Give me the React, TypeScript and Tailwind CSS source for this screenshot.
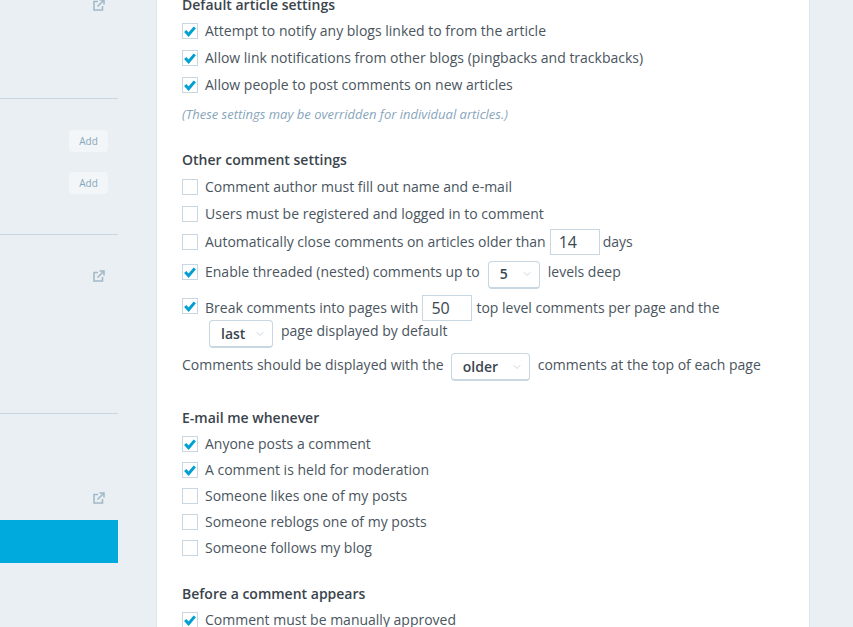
import { ChevronDown } from 'lucide-react'

function Check({ on, cls }: { on?: boolean; cls?: string }) {
  return (
    <span className={`flex h-4 w-4 shrink-0 items-center justify-center border border-[#c8d7e1] bg-white ${cls ?? ''}`}>
      {on && (
        <svg width="14" height="14" viewBox="0 0 14 14">
          <path d="M2.2 7 L5.6 10.8 L11.8 3.4" fill="none" stroke="#00a0d2" strokeWidth="3" />
        </svg>
      )}
    </span>
  )
}

function Row({ on, label, h }: { on?: boolean; label: string; h: string }) {
  return (
    <div className={`flex items-center gap-2 ${h}`}>
      <Check on={on} />
      <span className="-ml-[1px]">{label}</span>
    </div>
  )
}

function Select({ value, w }: { value: string; w: string }) {
  return (
    <span className={`inline-flex h-[28px] items-center justify-between rounded border border-b-2 border-[#c8d7e1] bg-white pl-[11px] pr-[6px] font-semibold text-[#3a4750] ${w}`}>
      {value}
      <ChevronDown size={12} className="text-[#c8d7e1]" />
    </span>
  )
}

function NumBox({ value, cls }: { value: string; cls?: string }) {
  return (
    <span className={`flex h-[26px] w-[50px] items-center border border-[#c8d7e1] bg-white pl-[8px] text-base text-[#3a4750] ${cls ?? ''}`}>
      {value}
    </span>
  )
}

function Heading({ children, cls }: { children: string; cls: string }) {
  return <h3 className={`flex items-center font-semibold text-[#3a444c] ${cls}`}>{children}</h3>
}

function LinkIcon() {
  return (
    <svg width="12" height="12" viewBox="0 0 12 12" fill="none" stroke="#a3b9c9" strokeWidth="1.6" className="-mt-[1px]">
      <path d="M5 2.5 H1 V11 H9.5 V7" />
      <path d="M4.5 7.5 L10.5 1.5 M6.5 1 H11 V5.5" />
    </svg>
  )
}

function Sidebar() {
  return (
    <aside className="flex w-[118px] shrink-0 flex-col">
      <div className="flex h-[99px] justify-end border-b border-[#c8d7e1] pr-[13px]">
        <LinkIcon />
      </div>
      <div className="flex h-[136px] flex-col items-end gap-[20px] border-b border-[#c8d7e1] pr-[10px] pt-[31px]">
        <AddButton />
        <AddButton />
      </div>
      <div className="flex h-[179px] justify-end border-b border-[#c8d7e1] pr-[13px] pt-[36px]">
        <LinkIcon />
      </div>
      <div className="flex h-[106px] justify-end pr-[13px] pt-[79px]">
        <LinkIcon />
      </div>
      <div className="h-[43px] bg-[#00aadc]" />
    </aside>
  )
}

function AddButton() {
  return (
    <span className="flex h-[22px] w-[39px] items-center justify-center rounded-sm bg-[#f3f6f8] text-[10px] text-[#87a6bc]">
      Add
    </span>
  )
}

export default function App() {
  return (
    <div className="flex h-[627px] w-[853px] overflow-hidden bg-[#e9eff3] font-['Open_Sans',sans-serif] text-sm text-[#4a555e]">
      <Sidebar />
      <main className="ml-[38px] h-[627px] w-[654px] shrink-0 overflow-hidden border-x border-[#dde6ec] bg-white pl-[25px]">
        <Heading cls="h-[18px] -mt-[4px]">Default article settings</Heading>
        <div className="mt-[-1px]">
          <Row on h="h-[27px] mt-[4px]" label="Attempt to notify any blogs linked to from the article" />
          <Row on h="h-[27px]" label="Allow link notifications from other blogs (pingbacks and trackbacks)" />
          <Row on h="h-[27px]" label="Allow people to post comments on new articles" />
        </div>
        <p className="mt-[5px] flex h-[22px] items-center text-[13px] italic text-[#87a6bc]">
          (These settings may be overridden for individual articles.)
        </p>
        <Heading cls="mt-[23px] h-[24px]">Other comment settings</Heading>
        <Row h="h-[27px] mt-[1px]" label="Comment author must fill out name and e-mail" />
        <Row h="h-[27px]" label="Users must be registered and logged in to comment" />
        <div className="mt-[1px] flex h-[28px] items-center gap-2">
          <Check />
          <span className="-ml-[1px]">Automatically close comments on articles older than</span>
          <span className="-ml-[4px] flex items-center gap-[3px]">
            <NumBox value="14" />
            <span>days</span>
          </span>
        </div>
        <div className="flex h-[32px] items-center gap-2">
          <Check on />
          <span className="-ml-[1px]">Enable threaded (nested) comments up to</span>
          <Select value="5" w="mt-[5px] w-[52px]" />
          <span>levels deep</span>
        </div>
        <div className="mt-[4px] flex h-[32px] items-center gap-2">
          <Check on cls="-mt-[4px]" />
          <span className="-ml-[1px]">Break comments into pages with</span>
          <NumBox value="50" cls="-ml-[4px]" />
          <span className="-ml-[4px]">top level comments per page and the</span>
        </div>
        <div className="-mt-[5px] ml-[27px] flex h-[24px] items-center gap-2">
          <Select value="last" w="mt-[6px] w-[64px]" />
          <span>page displayed by default</span>
        </div>
        <div className="mt-[8px] flex h-[28px] items-center gap-2">
          <span className="-ml-[0px]">Comments should be displayed with the</span>
          <Select value="older" w="-ml-[1px] mt-[4px] w-[79px]" />
          <span>comments at the top of each page</span>
        </div>
        <Heading cls="mt-[27px] h-[24px]">E-mail me whenever</Heading>
        <Row on h="h-[26px] mt-[1px]" label="Anyone posts a comment" />
        <Row on h="h-[26px]" label="A comment is held for moderation" />
        <Row h="h-[26px]" label="Someone likes one of my posts" />
        <Row h="h-[26px]" label="Someone reblogs one of my posts" />
        <Row h="h-[26px]" label="Someone follows my blog" />
        <Heading cls="mt-[21px] h-[24px]">Before a comment appears</Heading>
        <Row on h="h-[26px] mt-[1px]" label="Comment must be manually approved" />
      </main>
    </div>
  )
}
